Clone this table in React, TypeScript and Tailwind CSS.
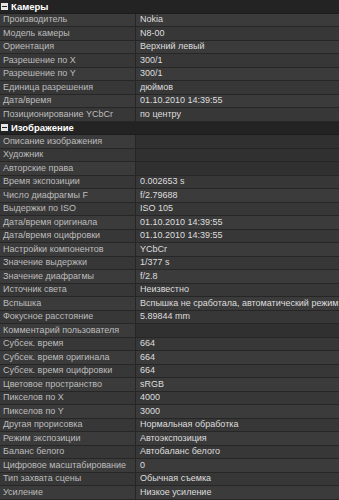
type Row = [string, string]

const cameraRows: Row[] = [
  ['Производитель', 'Nokia'],
  ['Модель камеры', 'N8-00'],
  ['Ориентация', 'Верхний левый'],
  ['Разрешение по X', '300/1'],
  ['Разрешение по Y', '300/1'],
  ['Единица разрешения', 'дюймов'],
  ['Дата/время', '01.10.2010 14:39:55'],
  ['Позиционирование YCbCr', 'по центру'],
]

const imageRows: Row[] = [
  ['Описание изображения', ''],
  ['Художник', ''],
  ['Авторские права', ''],
  ['Время экспозиции', '0.002653 s'],
  ['Число диафрагмы F', 'f/2.79688'],
  ['Выдержки по ISO', 'ISO 105'],
  ['Дата/время оригинала', '01.10.2010 14:39:55'],
  ['Дата/время оцифровки', '01.10.2010 14:39:55'],
  ['Настройки компонентов', 'YCbCr'],
  ['Значение выдержки', '1/377 s'],
  ['Значение диафрагмы', 'f/2.8'],
  ['Источник света', 'Неизвестно'],
  ['Вспышка', 'Вспышка не сработала, автоматический режим'],
  ['Фокусное расстояние', '5.89844 mm'],
  ['Комментарий пользователя', ''],
  ['Субсек. время', '664'],
  ['Субсек. время оригинала', '664'],
  ['Субсек. время оцифровки', '664'],
  ['Цветовое пространство', 'sRGB'],
  ['Пикселов по X', '4000'],
  ['Пикселов по Y', '3000'],
  ['Другая прорисовка', 'Нормальная обработка'],
  ['Режим экспозиции', 'Автоэкспозиция'],
  ['Баланс белого', 'Автобаланс белого'],
  ['Цифровое масштабирование', '0'],
  ['Тип захвата сцены', 'Обычная съемка'],
  ['Усиление', 'Низкое усиление'],
]

function SectionHeader({ title }: { title: string }) {
  return (
    <div className="flex items-center h-[13.5px] bg-[#232323] border-b border-[#1c1c1c] pl-[1px]">
      <span className="w-[7px] h-[7px] bg-[#e6e6e6] flex items-center justify-center mr-[3px]">
        <span className="w-[5px] h-[1px] bg-[#222]" />
      </span>
      <span className="text-[9.5px] font-bold text-white leading-none">{title}</span>
    </div>
  )
}

function PropRow({ label, value, index }: { label: string; value: string; index: number }) {
  const empty = value === ''
  const bg = index % 2 === 0 ? 'bg-[#3b3b3b]' : 'bg-[#373737]'
  return (
    <div className="flex h-[13.5px] border-b border-[#262626]">
      <div className={`w-[135px] shrink-0 pl-[3px] flex items-center text-[9px] leading-none text-[#bdbdbd] whitespace-nowrap overflow-hidden ${bg}`}>
        {label}
      </div>
      <div className="w-px bg-[#262626]" />
      <div
        className={`flex-1 pl-[4px] flex items-center text-[9px] leading-none text-[#dedede] whitespace-nowrap overflow-hidden ${
          empty ? 'bg-[#303030]' : bg
        }`}
      >
        {value}
      </div>
    </div>
  )
}

export default function App() {
  return (
    <div
      className="w-[339px] h-[500px] overflow-hidden bg-[#2b2b2b]"
      style={{ fontFamily: '"Liberation Sans", Arial, sans-serif' }}
    >
      <SectionHeader title="Камеры" />
      {cameraRows.map(([label, value], i) => (
        <PropRow key={label} label={label} value={value} index={i} />
      ))}
      <SectionHeader title="Изображение" />
      {imageRows.map(([label, value], i) => (
        <PropRow key={label} label={label} value={value} index={i} />
      ))}
    </div>
  )
}
